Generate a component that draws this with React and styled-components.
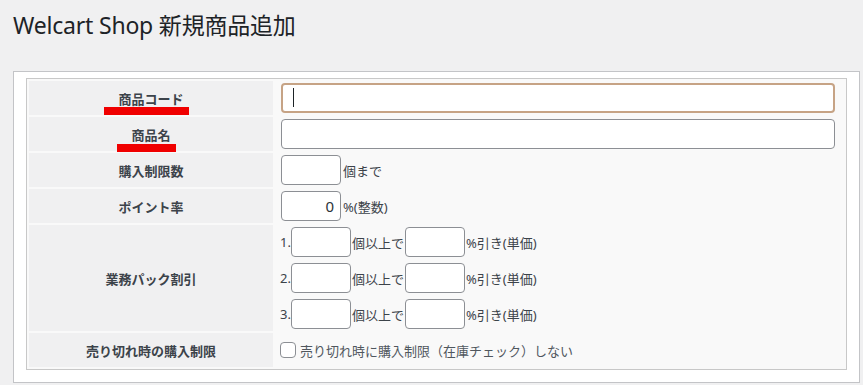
import React from 'react'
import styled, { createGlobalStyle } from 'styled-components'

const GlobalStyle = createGlobalStyle`
  body {
    margin: 0;
    background: #f0f0f1;
    font-family: "Noto Sans", "Noto Sans CJK JP", sans-serif;
    color: #3c434a;
  }
`;

const Wrap = styled.div`
  padding: 10px 4px 0 13px;
`;

const Title = styled.h1`
  margin: 0;
  font-size: 23px;
  font-weight: 400;
  line-height: 30px;
  letter-spacing: -0.2px;
  color: #1d2327;
`;

const Box = styled.div`
  box-sizing: border-box;
  width: 847px;
  height: 312px;
  margin-top: 31px;
  padding: 6px 11px 0 12px;
  background: #fff;
  border: 1px solid #c3c4c7;
`;

const FormTable = styled.div`
  box-sizing: border-box;
  width: 821px;
  display: grid;
  grid-template-columns: 244px 1fr;
  grid-template-rows: 34px 34px 34px 34px 106px 34px;
  gap: 2px;
  padding: 2px;
  border: 1px solid #c8c8c8;
  background: #f9f9f9;
`;

const Label = styled.div`
  position: relative;
  display: flex;
  align-items: center;
  justify-content: center;
  background: #f0f0f1;
  font-size: 13px;
  font-weight: 700;
  color: #3c434a;
`;

const Marker = styled.span`
  position: absolute;
  left: ${({ $left }) => $left}px;
  top: ${({ $top }) => $top}px;
  width: ${({ $width }) => $width}px;
  height: 8px;
  background: #f00000;
`;

const Value = styled.div`
  display: flex;
  flex-direction: ${({ $stack }) => ($stack ? 'column' : 'row')};
  align-items: ${({ $stack }) => ($stack ? 'flex-start' : 'center')};
  gap: ${({ $stack }) => ($stack ? '6px' : '0')};
  padding-top: ${({ $stack }) => ($stack ? '2px' : '0')};
  padding-left: ${({ $pad }) => $pad || 6}px;
  font-size: 13px;
  color: #3c434a;
`;

const Line = styled.div`
  display: flex;
  align-items: center;
  height: 30px;
`;

const Field = styled.div`
  position: relative;
`;

const Input = styled.input`
  box-sizing: border-box;
  display: block;
  width: ${({ $w }) => $w || 60}px;
  height: 30px;
  margin: 0;
  padding: 0 ${({ $num }) => ($num ? '6px' : '8px')};
  border: ${({ $focus }) => ($focus ? '2px solid #c6a385' : '1px solid #8c8f94')};
  border-radius: 4px;
  background: #fff;
  font-family: inherit;
  font-size: 15px;
  color: #2c3338;
  text-align: ${({ $num }) => ($num ? 'right' : 'left')};
  outline: none;
`;

const Caret = styled.span`
  position: absolute;
  left: 12px;
  top: 5px;
  width: 1px;
  height: 19px;
  background: #1d2327;
`;

const Unit = styled.span`
  margin: 0 1px 0 ${({ $gap }) => $gap || 1}px;
  white-space: nowrap;
`;

const Num = styled.span`
  width: 11px;
`;

const Check = styled.input`
  appearance: none;
  box-sizing: border-box;
  width: 16px;
  height: 16px;
  margin: 0 4px 0 0;
  border: 1px solid #8c8f94;
  border-radius: 4px;
  background: #fff;
`;

const CheckText = styled.span`
  color: #50575e;
  font-size: 13px;
`;

const packs = ['1.', '2.', '3.'];

const App = () => {
  return (
    <Wrap>
      <GlobalStyle />
      <Title>Welcart Shop 新規商品追加</Title>
      <Box>
        <FormTable>
          <Label>
            商品コード
            <Marker $left={75} $top={26} $width={85} />
          </Label>
          <Value>
            <Field>
              <Input $w={554} $focus defaultValue="" />
              <Caret />
            </Field>
          </Value>

          <Label>
            商品名
            <Marker $left={88} $top={27} $width={59} />
          </Label>
          <Value>
            <Input $w={554} defaultValue="" />
          </Value>

          <Label>購入制限数</Label>
          <Value>
            <Input defaultValue="" />
            <Unit $gap={2}>個まで</Unit>
          </Value>

          <Label>ポイント率</Label>
          <Value>
            <Input $num defaultValue="0" />
            <Unit $gap={2}>%(整数)</Unit>
          </Value>

          <Label>業務パック割引</Label>
          <Value $stack $pad={5}>
            {packs.map((n) => (
              <Line key={n}>
                <Num>{n}</Num>
                <Input defaultValue="" />
                <Unit>個以上で</Unit>
                <Input defaultValue="" />
                <Unit>%引き(単価)</Unit>
              </Line>
            ))}
          </Value>

          <Label>売り切れ時の購入制限</Label>
          <Value $pad={5}>
            <Check type="checkbox" />
            <CheckText>売り切れ時に購入制限（在庫チェック）しない</CheckText>
          </Value>
        </FormTable>
      </Box>
    </Wrap>
  )
}

export default App
